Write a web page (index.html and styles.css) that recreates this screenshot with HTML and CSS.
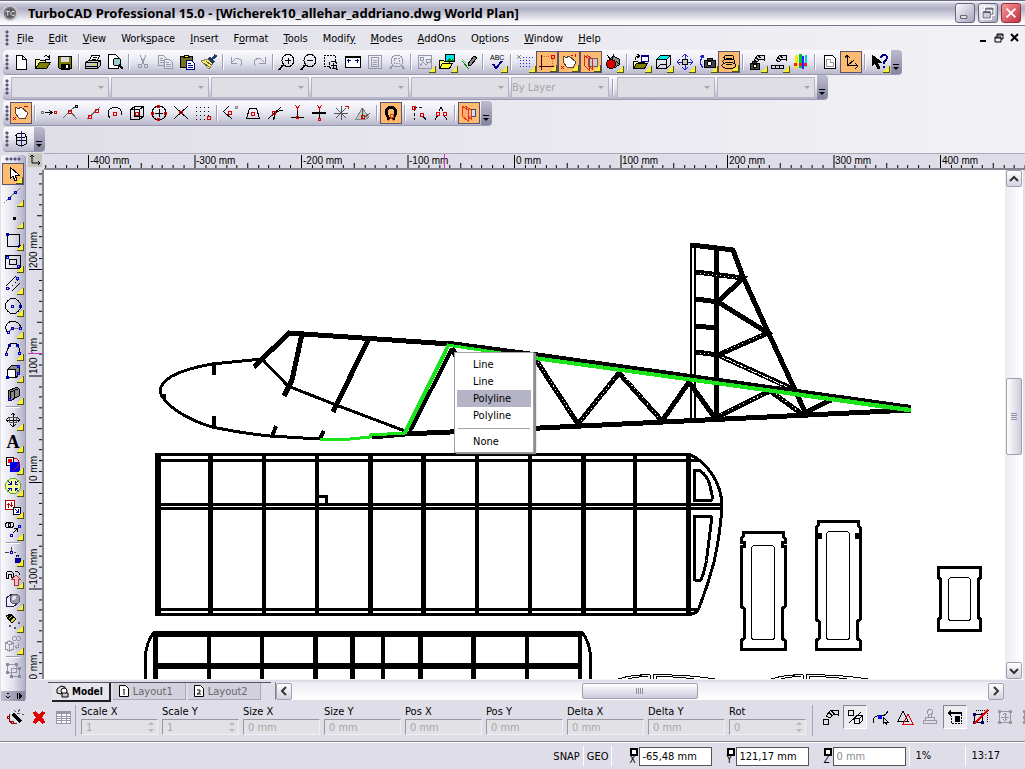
FILE: index.html
```html
<!DOCTYPE html>
<html lang="en">
<head>
    <meta charset="UTF-8">
    <meta name="viewport" content="width=device-width, initial-scale=1.0">
    <title>TurboCAD Professional 15.0</title>
    <link rel="stylesheet" href="styles.css">
</head>
<body>
    <header class="titlebar">
        <svg class="app-logo" viewBox="0 0 18 18"><circle cx="9" cy="9" r="8" fill="#77777c" stroke="#c8c8ce" stroke-width="2"/><circle cx="9" cy="9" r="5" fill="#55555a"/><path d="M4 7h5M6.500 7v5M14 7.500h-3l-1 1v2l1 1h3" stroke="#fff" fill="none"/></svg>
        <h1>TurboCAD Professional 15.0 - [Wicherek10_allehar_addriano.dwg World Plan]</h1>
        <div class="window-buttons">
            <button type="button" aria-label="Minimize"><svg viewBox="0 0 18 18"><path d="M4 12h7v3H4z" fill="#fff" stroke="#445"/></svg></button>
            <button type="button" aria-label="Restore"><svg viewBox="0 0 18 18"><path d="M6 6V3h9v8h-3M3 7h9v8H3z" fill="none" stroke="#fff" stroke-width="3"/><path d="M6.500 7V3.500h8v7h-2M3.500 7.500h8v7h-8zM4 8.500h8M7 4.500h8" fill="none" stroke="#445"/></svg></button>
            <button type="button" class="close" aria-label="Close"><svg viewBox="0 0 18 18"><path d="M4 4l10 10M14 4L4 14" stroke="#fff" stroke-width="2"/></svg></button>
        </div>
    </header>

    <nav class="menubar">
        <span class="grip"></span>
        <a href="#"><u>F</u>ile</a>
        <a href="#"><u>E</u>dit</a>
        <a href="#"><u>V</u>iew</a>
        <a href="#">Work<u>s</u>pace</a>
        <a href="#"><u>I</u>nsert</a>
        <a href="#">F<u>o</u>rmat</a>
        <a href="#"><u>T</u>ools</a>
        <a href="#">Modif<u>y</u></a>
        <a href="#"><u>M</u>odes</a>
        <a href="#"><u>A</u>ddOns</a>
        <a href="#">O<u>p</u>tions</a>
        <a href="#"><u>W</u>indow</a>
        <a href="#"><u>H</u>elp</a>
        <div class="doc-buttons">
            <button type="button" aria-label="Minimize document"><svg viewBox="0 0 10 10"><path d="M2 8h6" stroke="#000" stroke-width="2"/></svg></button>
            <button type="button" aria-label="Restore document"><svg viewBox="0 0 10 10"><path d="M3 4V1h6v5H7M3 2h6M1 4h6v5H1zM1 5h6" fill="none" stroke="#000"/></svg></button>
            <button type="button" aria-label="Close document"><svg viewBox="0 0 10 10"><path d="M1 1l7 7M8 1L1 8" stroke="#000" stroke-width="2"/></svg></button>
        </div>
    </nav>

    <div class="toolbar standard">
        <span class="grip"></span>
        <button type="button" aria-label="New"><svg viewBox="0 0 18 18"><path d="M4.500 2.500h6l4 4v10h-10zM10.500 2.500v4h4" fill="#fff"/></svg></button>
        <button type="button" aria-label="Open"><svg viewBox="0 0 18 18"><path d="M1.500 15.500v-9h4l1 1h5v3" fill="#ffff9c"/><path d="M1.500 15.500l4-6h11l-4 6z" fill="#808000"/><path d="M10 4q3-3 5 1M15 2v4h-4"/></svg></button>
        <button type="button" aria-label="Save"><svg viewBox="0 0 18 18"><path d="M2.500 3.500h13v12h-12l-1-1z" fill="#808000"/><path d="M5 4h8v5H5z" fill="#dcdcdc" stroke="none"/><path d="M5 11h8v5H5z" fill="#000"/><path d="M10 12h2v3h-2z" fill="#fff" stroke="none"/></svg></button>
        <span class="sep"></span>
        <button type="button" aria-label="Print"><svg viewBox="0 0 18 18"><path d="M5.500 7.500l2-5h8l-2 5z" fill="#fff"/><path d="M8.500 4.500h4M7.500 6.500h4"/><path d="M1.500 9.500l3-2h12v5l-3 3h-12z" fill="#c6c6c6"/><path d="M2 9.500h11.500v6M13.500 9.500l3-2M2 13.500h11"/><path d="M9 11.500h3" stroke="#dd0"/></svg></button>
        <button type="button" aria-label="Print preview"><svg viewBox="0 0 18 18"><path d="M2.500 1.500h7l3 3v11h-10z" fill="#fff"/><circle cx="11" cy="9" r="4" fill="#9cc"/><path d="M13 12l4 4" stroke-width="2"/></svg></button>
        <span class="sep"></span>
        <button type="button" class="off" aria-label="Cut"><svg viewBox="0 0 18 18"><path d="M6 2l4 9M12 2L8 11"/><circle cx="6" cy="13" r="2"/><circle cx="12" cy="13" r="2"/></svg></button>
        <button type="button" class="off" aria-label="Copy"><svg viewBox="0 0 18 18"><path d="M2.500 2.500h5l3 3v7h-8zM4 5.500h3M4 7.500h4M4 9.500h4"/><path d="M8.500 6.500h5l3 3v6h-8z" fill="#e6e6f0"/><path d="M10 9.500h3M10 11.500h5M10 13.500h5"/></svg></button>
        <button type="button" aria-label="Paste"><svg viewBox="0 0 18 18"><path d="M2.500 3.500h12v11h-12z" fill="#776f2c"/><path d="M5.500 4.500l1-2h4l1 2z" fill="#ff0"/><path d="M8.500 7.500h5l3 3v6h-8z" fill="#fff" stroke="#000080"/><path d="M10 10.500h3M10 12.500h5M10 14.500h5" stroke="#000080"/></svg></button>
        <button type="button" aria-label="Format painter"><svg viewBox="0 0 18 18"><path d="M1 8l7-2 5 4-4 6z" fill="#ffef60" stroke="#886"/><path d="M4 10l5 4M6 8l5 4" stroke="#555"/><path d="M9 5l5 5M13 6l3-4" stroke-width="3" stroke="#223a66"/></svg></button>
        <span class="sep"></span>
        <button type="button" class="off" aria-label="Undo"><svg viewBox="0 0 18 18"><path d="M3 4v6h6M4 9q4-6 9-2q2 4-1 6"/></svg></button>
        <button type="button" class="off" aria-label="Redo"><svg viewBox="0 0 18 18"><path d="M15 4v6H9M14 9q-4-6-9-2q-2 4 1 6"/></svg></button>
        <span class="sep"></span>
        <button type="button" aria-label="Zoom in"><svg viewBox="0 0 18 18"><circle cx="10" cy="7.500" r="6"/><path d="M7 7.500h6M10 4.500v6"/><path d="M5 12l-4 5" stroke-width="2"/></svg></button>
        <button type="button" aria-label="Zoom out"><svg viewBox="0 0 18 18"><circle cx="10" cy="7.500" r="6"/><path d="M7 7.500h6"/><path d="M5 12l-4 5" stroke-width="2"/></svg></button>
        <button type="button" aria-label="Zoom window"><svg viewBox="0 0 18 18"><path d="M13.500 8V2.500h-11v11H7" stroke-dasharray="2 1"/><circle cx="11" cy="12" r="4" stroke-dasharray="3 1"/><path d="M9 12h5M11.500 10v5M13 15l3 2"/></svg></button>
        <button type="button" aria-label="Zoom extents"><svg viewBox="0 0 18 18"><path d="M1.500 3.500h15v11h-15z" fill="#fff"/><path d="M2 4h14" stroke-width="2"/><path d="M3 7.500h4M4.500 5.500v4M11 7.500h4M13.500 5.500v4" stroke="#000080"/></svg></button>
        <button type="button" class="off" aria-label="Full view"><svg viewBox="0 0 18 18"><path d="M2.500 2.500h13v13h-13z"/><path d="M5.500 4.500h7v9h-7zM7 7.500h4M7 9.500h4M7 11.500h4"/></svg></button>
        <button type="button" class="off" aria-label="Zoom previous"><svg viewBox="0 0 18 18"><circle cx="9" cy="8" r="6"/><path d="M6.500 5.500h5v5h-5z" stroke-dasharray="2 1"/><path d="M4 13l-2 3M14 13l2 3" stroke-width="2"/></svg></button>
        <span class="sep"></span>
        <button type="button" class="off fly" aria-label="Insert picture"><svg viewBox="0 0 18 18"><path d="M2.500 2.500h13v13h-13z"/><circle cx="6" cy="6" r="2"/><path d="M4 13l3-4 3 3 2-2M10 6h4v3h-4z"/></svg></button>
        <button type="button" class="fly" aria-label="Open picture"><svg viewBox="0 0 18 18"><path d="M7.500 1.500h9v7h-9z" fill="#00e0f0"/><path d="M8 8l3-3 2 2 2-2 1 3z" fill="#080" stroke="none"/><path d="M1.500 15.500v-8h4l1 1h5v2" fill="#ff6"/><path d="M1.500 15.500l3-5h10l-3 5z" fill="#ffff30"/></svg></button>
        <button type="button" aria-label="Edit"><svg viewBox="0 0 18 18"><path d="M8 11l6-8 3 2-6 7-3 1z" fill="#888"/><path d="M2 8l7 8" stroke="#080"/><path d="M2 6l4 4" stroke="#8c8"/></svg></button>
        <span class="sep"></span>
        <button type="button" class="fly" aria-label="Spelling"><svg viewBox="0 0 18 18"><text x="2" y="7">ABC</text><path d="M5 11l3 4 6-7" stroke="#000080" stroke-width="2"/></svg></button>
        <span class="sep"></span>
        <button type="button" class="fly" aria-label="Grid"><svg viewBox="0 0 18 18"><path d="M1 2l4 4M5 2L1 6" stroke="#888"/><path d="M7 4.500h11M4 7.500h12M4 10.500h12M4 13.500h12" stroke="#22f" stroke-dasharray="1 2"/></svg></button>
        <button type="button" class="on fly" aria-label="Ortho"><svg viewBox="0 0 18 18"><path d="M3.500 2v15M1 13.500h15" stroke="#400"/><path d="M4 3.500h8M14.500 6v8" stroke="#c63" stroke-dasharray="1 1"/><path d="M13 2h3v3h-3z" stroke="#e00"/></svg></button>
        <button type="button" class="on fly" aria-label="Snap"><svg viewBox="0 0 18 18"><path d="M4 3l2 2 3-2 7 6-3 6-6-1-4-5z" fill="#fff" stroke="#543"/><path d="M1 13l3 3M4 13l-3 3M11 2h2M15 1l1 3" stroke="#e00"/></svg></button>
        <button type="button" class="on fly" aria-label="Workplane"><svg viewBox="0 0 18 18"><path d="M6.500 5.500h9v8h-9z" fill="#ccc" stroke="#666"/><path d="M2 2l5 4v11l-5-5zM5 2l5 4v10l-3-3" stroke="#d22"/></svg></button>
        <button type="button" class="fly" aria-label="Magic"><svg viewBox="0 0 18 18"><path d="M5 7l4-4 6 3v6l-5 3" fill="#888"/><circle cx="7" cy="11" r="4.500" fill="#d00"/><path d="M3 2l4 5M10 1l-2 5M12 8l4 4"/></svg></button>
        <span class="sep"></span>
        <button type="button" class="fly" aria-label="Open view"><svg viewBox="0 0 18 18"><path d="M1.500 15.500v-7h4l1 1h6v2" fill="#ff9"/><path d="M1.500 15.500l3-5h11l-3 5z" fill="#808000"/><path d="M9.500 2.500h7v6h-7z" fill="#fff" stroke="#000080"/><path d="M9 3h8" stroke="#000080" stroke-width="2"/><path d="M3 7q0-4 4-4M5 1l3 2-3 2"/></svg></button>
        <button type="button" class="fly" aria-label="Isometric"><svg viewBox="0 0 18 18"><path d="M2.500 6.500l4-4h10l-4 4z" fill="#0ee"/><path d="M2.500 6.500h10v9h-10zM12.500 15.500l4-4v-9M2.500 15.500l4-4h6"/></svg></button>
        <button type="button" class="fly" aria-label="Walk through"><svg viewBox="0 0 18 18"><circle cx="9" cy="9" r="3" fill="#ccb"/><path d="M9 6V2M6 4l3-3 3 3M9 12v4M6 14l3 3 3-3M6 9H2M4 6L1 9l3 3M12 9h4M14 6l3 3-3 3" stroke="#22c"/></svg></button>
        <button type="button" class="fly" aria-label="Camera"><svg viewBox="0 0 18 18"><path d="M6 7h11v7H6zM9 5h5v2H9z" fill="#444"/><circle cx="11.500" cy="10.500" r="2" fill="#fff"/><path d="M5 15q-5-6 0-12M2 4l3-2 1 3" stroke="#22c"/></svg></button>
        <button type="button" class="on fly" aria-label="Orbit"><svg viewBox="0 0 18 18"><ellipse cx="9" cy="4.500" rx="5" ry="2.500"/><ellipse cx="9" cy="8.500" rx="6" ry="3"/><ellipse cx="9" cy="12.500" rx="7" ry="3"/></svg></button>
        <span class="sep"></span>
        <button type="button" class="fly" aria-label="Camera properties"><svg viewBox="0 0 18 18"><path d="M6 7l4-5h6v5l-4-1-3 3z" fill="#ddd"/><path d="M8 5l3 2M10 3l3 2"/><path d="M2 10h9v6H2zM4 8h4v2H4z" fill="#444"/><circle cx="7" cy="13" r="2" fill="#fff"/></svg></button>
        <button type="button" class="fly" aria-label="View properties"><svg viewBox="0 0 18 18"><path d="M6 7l4-5h6v5l-4-1-3 3z" fill="#ddd"/><path d="M8 5l3 2M10 3l3 2M1.500 12.500h12v3h-12zM5.500 12.500v3M9.500 12.500v3"/></svg></button>
        <button type="button" aria-label="Colors"><svg viewBox="0 0 18 18"><path d="M4 2v13" stroke="#ee0" stroke-width="3"/><path d="M8 1v14" stroke="#0b3" stroke-width="3"/><path d="M11 3v13" stroke="#22f" stroke-width="2"/><path d="M14 2v12" stroke="#0cd" stroke-width="2"/><path d="M2 11h14" stroke="#e22" stroke-width="3" stroke-dasharray="3 2"/></svg></button>
        <span class="sep"></span>
        <button type="button" aria-label="Page"><svg viewBox="0 0 18 18"><path d="M4.500 2.500h8l3 3v10h-11z" fill="#fff"/><path d="M6.500 6.500h4v3h3v4h-7z" stroke="#999"/></svg></button>
        <button type="button" class="on" aria-label="Axes"><svg viewBox="0 0 18 18"><path d="M5.500 13V2M3 5l2-3 3 3M5.500 12.500H16M13 10l3 3-3 3M6 12L12 7"/></svg></button>
        <span class="sep"></span>
        <button type="button" class="fly" aria-label="Help pointer"><svg viewBox="0 0 18 18"><path d="M2 2v11l3-3 3 6 2-1-3-6h4z" fill="#000"/><path d="M11 5q0-3 3-3t3 3q0 2-3 4v2M14 13v2" stroke="#000080" stroke-width="2"/></svg></button>
        <button type="button" class="more" aria-label="Toolbar options"></button>
    </div>

    <div class="toolbar">
        <span class="grip"></span>
        <label class="combo"><select disabled aria-label="Style"><option></option></select></label>
        <label class="combo"><select disabled aria-label="Layer"><option></option></select></label>
        <label class="combo"><select disabled aria-label="Color"><option></option></select></label>
        <label class="combo"><select disabled aria-label="Line pattern"><option></option></select></label>
        <label class="combo"><select disabled aria-label="Line width"><option></option></select></label>
        <label class="combo"><select disabled aria-label="Pen"><option>By Layer</option></select></label>
        <span class="sep"></span>
        <label class="combo"><select disabled aria-label="Brush"><option></option></select></label>
        <label class="combo"><select disabled aria-label="Brush color"><option></option></select></label>
        <button type="button" class="more" aria-label="Toolbar options"></button>
    </div>

    <div class="toolbar">
        <span class="grip"></span>
        <button type="button" class="on" aria-label="No snap"><svg viewBox="0 0 18 18"><path d="M4 3l2 2 3-2 7 6-3 6-6-1-4-5z" fill="#fff" stroke="#543"/><path d="M1 13l3 3M4 13l-3 3M12 2h4" stroke="#e00"/></svg></button>
        <span class="sep"></span>
        <button type="button" aria-label="Snap arrow"><svg viewBox="0 0 18 18"><path d="M1.500 7.500h2v2h-2z" stroke="#777"/><path d="M5 8.500h7M9 6l3 2.500L9 11"/><path d="M14.500 7.500h2v2h-2z" stroke="#d00"/></svg></button>
        <button type="button" aria-label="Vertex"><svg viewBox="0 0 18 18"><path d="M1 14l7-7 7 8M9 6l5-4" stroke="#666"/><path d="M6.500 6.500h3v3h-3z" stroke="#d00"/><path d="M13.500 1.500h2v2h-2z"/></svg></button>
        <button type="button" aria-label="Midpoint"><svg viewBox="0 0 18 18"><path d="M3 15L16 3" stroke="#666"/><path d="M4.500 11.500h3v3h-3zM11.500 5.500h3v3h-3z" stroke="#d00"/></svg></button>
        <button type="button" aria-label="Arc center"><svg viewBox="0 0 18 18"><path d="M4 14q-4-5 0-9q5-4 10 0q2 3 1 6"/><path d="M7.500 8.500h3v3h-3z" stroke="#d00"/></svg></button>
        <button type="button" aria-label="Box center"><svg viewBox="0 0 18 18"><path d="M2.500 5.500h9v10h-9zM2.500 5.500l4-3h9v10l-4 3M11.500 5.500l4-3M6.500 3v9h9"/><path d="M7.500 8.500h3v3h-3z" stroke="#d00"/></svg></button>
        <button type="button" aria-label="Quadrant"><svg viewBox="0 0 18 18"><circle cx="9" cy="9" r="7"/><path d="M9 5v8M5 9h8"/><path d="M7.500 1.500h2v2h-2zM7.500 14.500h2v2h-2zM1.500 8.500h2v2h-2zM14.500 8.500h2v2h-2z" stroke="#d00"/></svg></button>
        <button type="button" aria-label="Intersection"><svg viewBox="0 0 18 18"><path d="M2 2l14 13M16 2L2 15"/><path d="M7.500 7.500h3v2h-3z" stroke="#d00"/></svg></button>
        <button type="button" aria-label="Grid snap"><svg viewBox="0 0 18 18"><path d="M2 3.500h14M2 7.500h14M2 11.500h14M2 15.500h10" stroke-dasharray="1 3"/><path d="M13.500 12.500h3v3h-3z" stroke="#d00"/></svg></button>
        <span class="sep"></span>
        <button type="button" aria-label="Nearest"><svg viewBox="0 0 18 18"><path d="M1 8l6-6M2 8l8 7"/><path d="M6.500 7.500h3v3h-3z" stroke="#d00"/><path d="M13.500 2.500h2v2h-2z" stroke="#888"/></svg></button>
        <button type="button" aria-label="Center of gravity"><svg viewBox="0 0 18 18"><path d="M5.500 4.500h7l3 10h-13z"/><path d="M7.500 8.500h3v3h-3z" stroke="#d00"/></svg></button>
        <button type="button" aria-label="Tangent"><svg viewBox="0 0 18 18"><path d="M2 15L15 3M8 16q-1-9 9-10"/><path d="M6.500 7.500h3v3h-3z" stroke="#d00"/></svg></button>
        <button type="button" aria-label="Ortho snap"><svg viewBox="0 0 18 18"><path d="M9.500 5v8M3 13.500h13"/><path d="M7 1l2.500 3L12 1M9.500 4v3M8.500 12.500h2v2h-2z" stroke="#d00"/></svg></button>
        <button type="button" aria-label="Perpendicular"><svg viewBox="0 0 18 18"><path d="M9.500 5v9"/><path d="M2 9h14" stroke-width="2"/><path d="M7 1l2.500 3L12 1M9.500 4v3M8.500 14.500h2v2h-2z" stroke="#d00"/></svg></button>
        <button type="button" aria-label="Divide"><svg viewBox="0 0 18 18"><path d="M2 9h14M9 2v14M4 4l10 10M14 4L4 14" stroke="#555"/><path d="M13 2h3v3" stroke="#d00"/></svg></button>
        <button type="button" aria-label="Face"><svg viewBox="0 0 18 18"><path d="M2 15l6-11 7 9-3 2z" fill="#b9cfc4" stroke="#888"/><path d="M8 4v10M10 14l6-5" stroke="#555"/><path d="M7.500 11.500h3v3h-3z" stroke="#d00"/></svg></button>
        <span class="sep"></span>
        <button type="button" class="on" aria-label="Magnetic point"><svg viewBox="0 0 18 18"><path d="M5 14h3M10 14h3M6 13Q3 8 5 5q4-4 8 0q2 3-1 8" stroke-width="3"/><path d="M8 10h3v3H8zM6 17l3-3 3 3" stroke="#d40"/></svg></button>
        <span class="sep"></span>
        <button type="button" aria-label="Extend ortho"><svg viewBox="0 0 18 18"><path d="M4.500 4v12M4 3.500h10" stroke-dasharray="3 2"/><path d="M2.500 2.500h3v3h-3zM10.500 9.500h3v3h-3z" stroke="#d00"/><path d="M13 12l3 4"/></svg></button>
        <button type="button" aria-label="Apex"><svg viewBox="0 0 18 18"><path d="M3 16l3-5M15 16l-3-5M7 7l2-4 2 4"/><path d="M4.500 8.500h3v3h-3zM11.500 8.500h3v3h-3z" stroke="#d00"/></svg></button>
        <span class="sep"></span>
        <button type="button" class="on" aria-label="Plane snap"><svg viewBox="0 0 18 18"><path d="M8.500 5.500h7v7h-7z" fill="#ddd" stroke="#447"/><path d="M2 2l6 4v11l-6-5zM5 2l6 4v9l-3-2" stroke="#e31" fill="#f9a07088"/></svg></button>
        <button type="button" class="more" aria-label="Toolbar options"></button>
    </div>

    <div class="toolbar short">
        <span class="grip"></span>
        <button type="button" aria-label="Cylinder"><svg viewBox="0 0 18 18"><ellipse cx="9" cy="5.500" rx="5" ry="2.500"/><path d="M4 6v8q5 4 10 0V6M4 10h10"/><path d="M9 1v16" stroke="#22a"/></svg></button>
        <button type="button" class="more" aria-label="Toolbar options"></button>
    </div>

    <main class="workspace">
        <aside class="palette">
            <span class="grip-h"></span>
            <button type="button" class="on fly" aria-label="Select"><svg viewBox="0 0 18 18"><path d="M6 2v12l3-3 2 5 2-1-2-5h4z" fill="#fff"/></svg></button>
            <button type="button" class="fly" aria-label="Line"><svg viewBox="0 0 18 18"><path d="M0 16L16 1" stroke-dasharray="2 1" stroke="#777"/><path d="M4.500 10.500h2v2h-2zM10.500 4.500h2v2h-2z" stroke="#00c"/></svg></button>
            <button type="button" class="fly" aria-label="Point"><svg viewBox="0 0 18 18"><path d="M9 8h3v3H9z" fill="#000" stroke="none"/></svg></button>
            <button type="button" class="fly" aria-label="Rectangle"><svg viewBox="0 0 18 18"><path d="M3.500 3.500h12v12h-12z"/><path d="M2.500 2.500h2v2h-2zM14.500 14.500h2v2h-2z" stroke="#00c"/></svg></button>
            <button type="button" class="fly" aria-label="Double rectangle"><svg viewBox="0 0 18 18"><path d="M1.500 2.500h15v13h-15zM5.500 6.500h7v5h-7z"/><path d="M2.500 3.500h2v2h-2zM13.500 12.500h2v2h-2z" stroke="#00c"/></svg></button>
            <button type="button" class="fly" aria-label="Parallel lines"><svg viewBox="0 0 18 18"><path d="M2 11L12 1M8 16l8-8"/><path d="M5 14L15 4" stroke-dasharray="2 2"/><path d="M2.500 12.500h2v2h-2zM12.500 2.500h2v2h-2z" stroke="#00c"/></svg></button>
            <button type="button" class="fly" aria-label="Circle"><svg viewBox="0 0 18 18"><circle cx="9" cy="9" r="7.500"/><path d="M7.500 8.500h2v2h-2zM15.500 8.500h2v2h-2z" stroke="#00c"/></svg></button>
            <button type="button" class="fly" aria-label="Arc"><svg viewBox="0 0 18 18"><path d="M4 14Q0 9 3 5q4-5 11-1q3 3 3 5"/><path d="M5 13l3-4h7" stroke="#777"/><path d="M3.500 12.500h2v2h-2zM7.500 8.500h2v2h-2zM15.500 8.500h2v2h-2z" stroke="#00c"/></svg></button>
            <button type="button" class="fly" aria-label="Curve"><svg viewBox="0 0 18 18"><path d="M2 13Q5 4 7 2h5q3 3 4 9"/><path d="M1.500 12.500h2v2h-2zM4.500 3.500h2v2h-2zM12.500 3.500h2v2h-2zM14.500 11.500h2v2h-2z" stroke="#00c"/></svg></button>
            <button type="button" class="fly" aria-label="Box"><svg viewBox="0 0 18 18"><path d="M4 6l4-4h7v9l-3 4" fill="#888"/><path d="M3.500 6.500h8v8h-8z" fill="#fff"/><path d="M2.500 13.500h2v2h-2zM13.500 2.500h2v2h-2zM13.500 9.500h2v2h-2z" stroke="#00c"/></svg></button>
            <button type="button" class="fly" aria-label="Wall"><svg viewBox="0 0 18 18"><path d="M4 6l9-4 2 2v7l-9 5-2-2z" fill="#888"/><path d="M6 7l8-3M6 7v8M10 6v8"/><path d="M4.500 13.500h2v2h-2z" stroke="#00c"/></svg></button>
            <span class="sep-h"></span>
            <button type="button" class="fly" aria-label="Move"><svg viewBox="0 0 18 18"><path d="M9 2v14M2 9h14M6.500 4.500L9 2l2.500 2.500M6.500 13.500L9 16l2.500-2.500M4.500 6.500L2 9l2.500 2.500M13.500 6.500L16 9l-2.500 2.500"/><path d="M5.500 6.500h7v5h-7z" stroke="#555"/></svg></button>
            <button type="button" class="fly letter" aria-label="Text">A</button>
            <button type="button" class="fly" aria-label="Boolean"><svg viewBox="0 0 18 18"><path d="M2.500 2.500h7v8h-7z" fill="#fff"/><path d="M4 4h3v3H4z" fill="#e00" stroke="#e00"/><path d="M6 7h10v10H6z" fill="#00e" stroke="none"/><path d="M10 3q6 1 5 7L9 16" stroke="#e00"/></svg></button>
            <button type="button" class="fly" aria-label="Converge"><svg viewBox="0 0 18 18"><circle cx="9" cy="9" r="7.500" fill="#f4ff9a" stroke="#5a2"/><path d="M4 4l3 3M7 4v3H4M14 4l-3 3M11 4v3h3M4 14l3-3M4 11h3v3M14 14l-3-3M14 11h-3v3" stroke="#00a"/></svg></button>
            <button type="button" class="fly" aria-label="Transform"><svg viewBox="0 0 18 18"><path d="M1.500 1.500h9v9h-9z" fill="#fff" stroke="#a00"/><path d="M4.500 4v5M7.500 3v5M3 5.500h3M6 6.500h3" stroke="#a00"/><path d="M9.500 8.500h7v7h-7z" fill="#fff"/><path d="M11 10l3 3M14.500 10v3h-3" stroke="#00c"/></svg></button>
            <button type="button" class="fly" aria-label="Link"><svg viewBox="0 0 18 18"><circle cx="4" cy="4" r="2.500"/><circle cx="7" cy="4" r="2.500"/><path d="M9 12l4-4M10 7.500h3v3"/><path d="M6.500 13.500h2v2h-2zM14.500 4.500h2v2h-2z" stroke="#00c"/></svg></button>
            <span class="sep-h"></span>
            <button type="button" class="fly" aria-label="Lock"><svg viewBox="0 0 18 18"><path d="M1 5.500h4M7.500 0v4M10 5.500h2" stroke="#633"/><path d="M6.500 4.500h2v2h-2z" stroke="#00c"/><path d="M11 11h5v4h-5z" fill="#00a" stroke="#006"/><path d="M12.500 10V8.500h2V10" stroke="#006"/></svg></button>
            <button type="button" class="fly" aria-label="Pull"><svg viewBox="0 0 18 18"><path d="M5 9H2V4l2-2h3l2 2v4H7V5H4v4M11 2q4 0 5 4"/><path d="M12 6l4 4h-2v6h-4v-6H8z" fill="#fbb" stroke="#a33"/></svg></button>
            <button type="button" class="fly" aria-label="Shade"><svg viewBox="0 0 18 18"><path d="M2 7l6-4 7 2v6l-6 5-7-1z" fill="#eef" stroke="#225"/><circle cx="11" cy="8" r="5" fill="#99a" stroke="#556"/><circle cx="10" cy="7" r="2" fill="#dde" stroke="none"/></svg></button>
            <button type="button" class="fly" aria-label="Light"><svg viewBox="0 0 18 18"><path d="M2 3l5-2 5 5-4 4z" fill="#dd2"/><path d="M3 6l4-4M5 8l4-4" stroke-width="2"/><path d="M5.500 12.500h1v1h-1zM14.500 9.500h1v1h-1zM10.500 14.500h1v1h-1z" stroke="#558"/></svg></button>
            <button type="button" class="off fly" aria-label="Group"><svg viewBox="0 0 18 18"><path d="M1.500 8l4-2 4 2v6l-4 2-4-2zM2 8l4 2 3-2M5.500 10v6M14.500 8v4h-3M13 10l-2 2 2 2"/><circle cx="10.500" cy="3.500" r="2"/><circle cx="14.500" cy="3.500" r="2"/></svg></button>
            <span class="sep-h"></span>
            <button type="button" class="off" aria-label="Nodes"><svg viewBox="0 0 18 18"><path d="M3.500 3.500h9v8h-9zM7.500 7.500h8v8h-8z"/><path d="M2 2h3v3H2zM11 2h3v3h-3zM2 10h3v3H2zM14 14h3v3h-3zM6 14h3v3H6zM14 6h3v3h-3z" fill="#88899c" stroke="none"/></svg></button>
            <button type="button" class="more-h" aria-label="Palette options"><svg viewBox="0 0 24 10"><path d="M6 2h2M5 5l2 2 2-2M16.500 2v6"/><path d="M18 2v6l3-3z" fill="#000"/></svg></button>
        </aside>

        <button type="button" class="origin" aria-label="Ruler origin"><svg viewBox="0 0 14 14"><path d="M4 2v8h8M2 4l2-2 2 2M10 8l2 2-2 2" stroke="#000" fill="none"/></svg></button>

        <div class="ruler-top">
            <svg>
                <defs>
                    <pattern id="ticksX" x="44" y="0" width="106.500" height="14" patternUnits="userSpaceOnUse">
                        <path d="M.5 1v13M11 11v3M21.500 11v3M32 11v3M42.500 11v3M53.500 9v5M64 11v3M74.500 11v3M85.500 11v3M96 11v3" stroke="#000"/>
                    </pattern>
                </defs>
                <rect width="100%" height="14" fill="url(#ticksX)"/>
                <text x="46" y="10">-400 mm</text>
                <text x="152" y="10">-300 mm</text>
                <text x="259" y="10">-200 mm</text>
                <text x="365" y="10">-100 mm</text>
                <text x="472" y="10">0 mm</text>
                <text x="578" y="10">100 mm</text>
                <text x="685" y="10">200 mm</text>
                <text x="791" y="10">300 mm</text>
                <text x="898" y="10">400 mm</text>
                <path d="M400.500 0v14" stroke="#c3c"/>
            </svg>
        </div>

        <div class="ruler-left">
            <svg>
                <defs>
                    <pattern id="ticksY" x="0" y="99" width="14" height="106.500" patternUnits="userSpaceOnUse">
                        <path d="M1 .5h13M11 11h3M11 21.500h3M11 32h3M11 42.500h3M9 53.500h5M11 64h3M11 74.500h3M11 85.500h3M11 96h3" stroke="#000"/>
                    </pattern>
                </defs>
                <rect width="14" height="100%" fill="url(#ticksY)"/>
                <text transform="translate(9 98) rotate(-90)">200 mm</text>
                <text transform="translate(9 204) rotate(-90)">100 mm</text>
                <text transform="translate(9 311) rotate(-90)">0 mm</text>
                <text transform="translate(9 418) rotate(-90)">-100 mm</text>
                <text transform="translate(9 524) rotate(-90)">-200 mm</text>
                <path d="M0 183.500h14" stroke="#c3c"/>
            </svg>
        </div>

        <section class="canvas">
            <svg class="drawing">
                <g transform="translate(-44 -170)">
                    <!-- fuselage nose and cabin -->
                    <g stroke-width="3">
                        <path d="M262 359L212 364Q188 368 172 376Q160 383 160 392Q163 401 177 411Q192 421 212 427Q240 433 270 436L320 439"/>
                        <path d="M262 359L288 386L336 405L405 431"/>
                        <path d="M161 396h5" stroke-width="4"/>
                    </g>
                    <g stroke-width="5">
                        <path d="M254 367L289 333L450 344"/>
                        <path d="M302 334L292 380L284 396M369 338L333 412"/>
                        <path d="M214 364v11M214 416v11M276 426l-4 11M324 431l-4 7" stroke-width="4"/>
                        <path d="M372 437L405 434L540 428L911 410"/>
                    </g>
                    <path d="M452 349L410 431" stroke-width="4"/>
                    <path d="M450 343L534 354L911 407" stroke-width="4"/>
                    <!-- tail trusses -->
                    <g stroke-width="5">
                        <path d="M452 348l6 12M536 360L578 424L619 373L662 421L689 382L715 418L770 391L802 414L831 400"/>
                        <path d="M692 245L733 250L743 277L768 332L795 390L805 412"/>
                        <path d="M716 248V420"/>
                        <path d="M696 272L743 278L718 302L768 333L718 355L795 390M696 299l22 3M696 326l20 2M696 352l22 3"/>
                    </g>
                    <path d="M691 243V420M695 248V420" stroke-width="2"/>
                    <g stroke="#fff" stroke-width="1" stroke-dasharray="1 3">
                        <path d="M538 362L575 419M581 421L615 378M624 376L659 418M721 414L764 394M776 394L798 411M700 273L740 278M727 350L762 335M700 353h12"/>
                        <path d="M722 357L787 387" stroke-dasharray="3 1"/>
                    </g>
                    <g stroke="#1be41b" stroke-width="4">
                        <path d="M320 439L350 439L370 437L370 435L405 433L448 345L454 346L534 358L911 411" stroke-width="3"/>
                        <path d="M405 433L448 346M534 358L911 410"/>
                    </g>
                    <!-- wing -->
                    <path d="M158 453V616" stroke-width="6"/>
                    <g stroke-width="3">
                        <path d="M157 454.500H691M160 460.500H698M160 504.500H722M160 508.500H722M160 609.500H699M157 614.500H692"/>
                        <path d="M691 455Q702 460 712 474Q722 489 722 507Q720 535 714 562Q708 585 699 608Q697 614 690 614"/>
                        <path d="M694.500 470.500h5q7 4 10 13l3 14q0 2-2 3h-16zM694.500 516.500h15q3 0 2 4l-5 40q-3 14-5 18q-2 4-7 1z"/>
                        <path d="M318 496.500h8.500v8" stroke-width="3"/>
                    </g>
                    <path d="M210.500 454V616M370.500 454V616M423.500 454V616M583.500 454V616M688.500 454V616" stroke-width="5"/>
                    <path d="M264 454V616M317 454V616M477 454V616M530 454V616M635 454V616" stroke-width="4"/>
                    <!-- second wing panel -->
                    <path d="M155 633.500H581M155 665.500H581" stroke-width="6"/>
                    <path d="M155.500 631V680M315.500 631V680M352.500 631V680M420.500 631V680M473.500 631V680" stroke-width="5"/>
                    <path d="M209 631V680M262 631V680M383 631V680M527 631V680M580 631V680" stroke-width="4"/>
                    <path d="M155 631Q145 643 145.500 660V680M581 631Q591 643 590.500 660V680" stroke-width="3"/>
                    <!-- bulkheads -->
                    <g stroke-width="3">
                        <path d="M743 532.500h40v4l2 2v4h-3v4h3v60l-3 2v30l3 2v9h-44v-9l3-2v-30l-3-2v-60h3v-4h-3v-4l2-2z"/>
                        <path d="M818 521.500h40v4l2 2v7h-4v3h4v82l-3 2v17l3 2v9h-44v-9l3-2v-17l-3-2v-82h4v-3h-4v-7l2-2z"/>
                        <path d="M938.500 567.500h42v10l-2 2v38l2 2v11h-42v-11l2-2v-38l-2-2z"/>
                    </g>
                    <g stroke-width="1">
                        <rect x="751.500" y="545.500" width="23" height="94" rx="3"/>
                        <rect x="826.500" y="531.500" width="23" height="108" rx="3"/>
                        <rect x="948.500" y="577.500" width="22" height="43" rx="3"/>
                        <path d="M618 679q16-5 32-4v4h3v-4q30-1 62 4M628 679q10-3 20-2M656 679v-2q20-1 38 2"/>
                        <path d="M771 679q16-5 32-4v4h3v-4q30-1 62 4M781 679q10-3 20-2M809 679v-2q20-1 38 2"/>
                    </g>
                </g>
            </svg>
            <div class="popup" role="menu">
                <button type="button" role="menuitem">Line</button>
                <button type="button" role="menuitem">Line</button>
                <button type="button" role="menuitem" class="selected">Polyline</button>
                <button type="button" role="menuitem">Polyline</button>
                <hr>
                <button type="button" role="menuitem">None</button>
            </div>
        </section>

        <div class="scroll-y">
            <button type="button" class="arrow" aria-label="Scroll up"><svg viewBox="0 0 10 10"><path d="M1 7l4-4 4 4"/></svg></button>
            <span class="before"></span>
            <span class="thumb"></span>
            <span class="after"></span>
            <button type="button" class="arrow" aria-label="Scroll down"><svg viewBox="0 0 10 10"><path d="M1 3l4 4 4-4"/></svg></button>
        </div>

        <div class="bottom-row">
            <div class="tabs">
                <button type="button" class="tab active"><svg viewBox="0 0 14 14"><path d="M1 4l4-3 4 1v4L5 9 1 8z" fill="#ddd" stroke="#000"/><circle cx="8" cy="6" r="3" fill="#fff" stroke="#000"/><path d="M6 8h6v4H6z" fill="#ccc" stroke="#000"/></svg>Model</button>
                <button type="button" class="tab"><svg viewBox="0 0 14 14"><path d="M2.500 1.500h6l3 3v8h-9zM6 6l1-1v6" fill="#fff" stroke="#000"/></svg>Layout1</button>
                <button type="button" class="tab"><svg viewBox="0 0 14 14"><path d="M2.500 1.500h6l3 3v8h-9z" fill="#fff" stroke="#000"/><path d="M5 6h3v2L5 10h4" fill="none" stroke="#000"/></svg>Layout2</button>
            </div>
            <div class="scroll-x">
                <button type="button" class="arrow" aria-label="Scroll left"><svg viewBox="0 0 10 10"><path d="M7 1L3 5l4 4"/></svg></button>
                <span class="before"></span>
                <span class="thumb"></span>
                <span class="after"></span>
                <button type="button" class="arrow" aria-label="Scroll right"><svg viewBox="0 0 10 10"><path d="M3 1l4 4-4 4"/></svg></button>
            </div>
        </div>
    </main>

    <form class="inspector">
        <div class="inspector-tools">
            <button type="button" aria-label="Wizard"><svg viewBox="0 0 18 18"><path d="M3 6v6q3 5 8 3" stroke="#900"/><path d="M1.500 8.500h2v2h-2zM5.500 13.500h2v2h-2z" stroke="#900"/><path d="M7 6l8 8" stroke-width="3"/><path d="M8 2l2 2M14 1l-2 3M16 6h2M11 5h3" stroke="#555"/></svg></button>
            <button type="button" aria-label="Cancel"><svg viewBox="0 0 18 18"><path d="M4 4l10 11M14 4L4 15" stroke="#e00000" stroke-width="4"/></svg></button>
            <button type="button" class="off" aria-label="Table"><svg viewBox="0 0 18 18"><path d="M2.500 3.500h14v12h-14z" fill="#fff"/><path d="M3 5h13" stroke-width="2"/><path d="M3 8.500h13M3 10.500h13M3 12.500h13M7.500 5v10M12.500 5v10"/></svg></button>
        </div>
        <label class="field spin">Scale X<input type="text" value="1" disabled></label>
        <label class="field spin">Scale Y<input type="text" value="1" disabled></label>
        <label class="field">Size X<input type="text" value="0 mm" disabled></label>
        <label class="field">Size Y<input type="text" value="0 mm" disabled></label>
        <label class="field">Pos X<input type="text" value="0 mm" disabled></label>
        <label class="field">Pos Y<input type="text" value="0 mm" disabled></label>
        <label class="field">Delta X<input type="text" value="0 mm" disabled></label>
        <label class="field">Delta Y<input type="text" value="0 mm" disabled></label>
        <label class="field spin">Rot<input type="text" value="0" disabled></label>
        <div class="inspector-modes">
            <button type="button" aria-label="Properties"><svg viewBox="0 0 18 18"><path d="M5 8l5-6h7v5l-4-1-4 4z" fill="#ddd"/><path d="M8 5l4 3M10 3l4 3"/><path d="M2.500 11.500h5v5h-5z"/></svg></button>
            <button type="button" class="pressed" aria-label="2D/3D"><svg viewBox="0 0 18 18"><path d="M2.500 2.500h5v5h-5zM3 15L15 4M8.500 10.500h5v5h-5zM8.500 10.500l3-3h5v5l-3 3M13.500 10.500l3-3"/></svg></button>
            <button type="button" aria-label="Edit nodes"><svg viewBox="0 0 18 18"><path d="M2 15q0-8 6-7t9-5M12 9v7l2-2 2 3M12 9l5 5h-3"/><path d="M7 7h3v3H7z" fill="#00e" stroke="#00e"/></svg></button>
            <button type="button" aria-label="Copy mode"><svg viewBox="0 0 18 18"><path d="M2 13l5-10 5 10z"/><path d="M7 16l5-10 5 10z" stroke="#d00"/></svg></button>
            <button type="button" class="off" aria-label="Stamp"><svg viewBox="0 0 18 18"><circle cx="9" cy="4" r="2.500"/><path d="M7.500 6v3M10.500 6v3M4.500 9.500h9v3h-9zM2.500 12.500h13v3h-13z"/></svg></button>
            <button type="button" class="pressed" aria-label="Reference point"><svg viewBox="0 0 18 18"><path d="M15.500 5.500v10h-10v-8" stroke-dasharray="2 1"/><path d="M9 8h4v5H9z" fill="#000"/><path d="M1 5l4-3v2h11v2H5v2z" fill="#000" stroke="none"/></svg></button>
            <button type="button" aria-label="Selector"><svg viewBox="0 0 18 18"><path d="M5 2.500h11.500v11" stroke-dasharray="1 1"/><path d="M3.500 6.500h8v8h-8z"/><path d="M2 5h3v3H2zM10 13h3v3h-3zM2 13h3v3H2zM10 5h3v3h-3z" fill="#006" stroke="none"/><path d="M3 16L17 2" stroke="#e00" stroke-width="2"/></svg></button>
            <button type="button" class="off" aria-label="Nodes"><svg viewBox="0 0 18 18"><path d="M3.500 3.500h11v11h-11zM9 5v8M5 9h8M7 7l2-2 2 2M7 11l2 2 2-2"/><path d="M2 2h3v3H2zM13 2h3v3h-3zM2 13h3v3H2zM13 13h3v3h-3z" fill="#999" stroke="none"/></svg></button>
            <button type="button" class="off" aria-label="More nodes"><svg viewBox="0 0 18 18"><path d="M3.500 3.500h11v11h-11z"/><path d="M2 2h3v3H2zM2 8h3v3H2zM2 13h3v3H2z" fill="#999" stroke="none"/></svg></button>
        </div>
    </form>

    <footer class="statusbar">
        <button type="button" class="mode">SNAP</button>
        <button type="button" class="mode">GEO</button>
        <label class="coord"><span class="axis">X</span><input type="text" value="-65,48 mm"></label>
        <label class="coord"><span class="axis">Y</span><input type="text" value="121,17 mm"></label>
        <label class="coord"><span class="axis">Z</span><input type="text" class="dim" value="0 mm"></label>
        <span class="zoom">1%</span>
        <span class="clock">13:17</span>
    </footer>
</body>
</html>
```
FILE: styles.css
```css
* {
    margin: 0;
    padding: 0;
    box-sizing: border-box;
}

body {
    height: 100vh;
    display: flex;
    flex-direction: column;
    overflow: hidden;
    background: linear-gradient(90deg, #dfdee8, #f2f2f6) 0 0 / 100% 153px no-repeat, #dfdee8;
    font-family: Tahoma, "DejaVu Sans Condensed", "Liberation Sans", sans-serif;
    font-size: 11px;
    color: #000;
}

button, input, select {
    font: inherit;
    color: inherit;
}

button {
    border: none;
    background: none;
    flex: none;
}

svg {
    display: block;
}

/* title bar */
.titlebar {
    display: flex;
    align-items: center;
    height: 26px;
    flex: none;
    padding: 0 4px 0 2px;
    border-top: 1px solid #6c6b85;
    border-bottom: 1px solid #77768f;
    background: linear-gradient(#fff 0, #c6c5d6 3px, #b1b0c4 8px, #f4f4f8 20px, #fff 24px);
}

.app-logo {
    width: 16px;
    height: 16px;
    margin-right: 10px;
}

.titlebar h1 {
    flex: 1;
    font-family: "Trebuchet MS", "Noto Sans", sans-serif;
    font-size: 13px;
    white-space: nowrap;
    font-weight: bold;
}

.window-buttons {
    display: flex;
    gap: 3px;
}

.window-buttons button {
    width: 20px;
    height: 20px;
    padding: 1px;
    border: 1px solid #66657e;
    border-radius: 3px;
    background: linear-gradient(135deg, #fafafc, #a5a4ba);
}

.window-buttons svg {
    width: 16px;
    height: 16px;
}

.window-buttons .close {
    background: linear-gradient(135deg, #f49a9a, #c33040);
    border-color: #93303c;
}

/* menu */
.menubar {
    display: flex;
    align-items: center;
    height: 24px;
    flex: none;
    padding-left: 3px;
}

.menubar a {
    color: #000;
    text-decoration: none;
    padding: 0 8px 0 7px;
}

.grip {
    width: 7px;
    height: 16px;
    flex: none;
    background: radial-gradient(circle at 4px 2px, #555472 1px, transparent 2px) 0 0 / 7px 4px;
}

.doc-buttons {
    display: flex;
    gap: 6px;
    margin-left: auto;
    padding-right: 5px;
}

.doc-buttons button {
    width: 10px;
    height: 10px;
}

/* toolbars */
.toolbar {
    display: flex;
    align-items: center;
    height: 25px;
    flex: none;
    width: max-content;
    margin: 0 0 1px 3px;
    border-radius: 4px;
    border-bottom: 1px solid #9a99b2;
    background: linear-gradient(#fbfbfe, #e6e6f0 50%, #b9b8cc);
}

.toolbar.standard {
    margin-bottom: 0;
}

.toolbar svg,
.palette svg,
.inspector svg {
    width: 18px;
    height: 18px;
    margin: auto;
    fill: none;
    stroke: #000;
    shape-rendering: crispEdges;
}

.toolbar text {
    font-family: "Liberation Sans", sans-serif;
    font-size: 7px;
    fill: #000;
    stroke: none;
}

.palette .letter {
    font-family: "Liberation Serif", serif;
    font-size: 18px;
    line-height: 22px;
    font-weight: bold;
}

.toolbar button {
    position: relative;
    width: 22px;
    height: 22px;
}

.toolbar .on,
.palette .on {
    background: #fdbb70;
    border: 1px solid #5a5370;
}

.toolbar .off svg,
.palette .off svg,
.inspector .off svg {
    stroke: #9796ab;
}

.fly::after {
    content: "";
    position: absolute;
    right: 0;
    bottom: 0;
    width: 6px;
    height: 6px;
    background: linear-gradient(135deg, transparent 50%, #f5ef3a 50%);
    border-right: 1px solid #55520e;
    border-bottom: 1px solid #55520e;
}

.sep {
    width: 2px;
    height: 16px;
    margin: 0 2px;
    flex: none;
    background: #9c9bb4;
    border-right: 1px solid #fff;
}

.toolbar .more {
    width: 11px;
    height: 24px;
    margin-left: 1px;
    border-radius: 0 4px 4px 0;
    background: linear-gradient(#bdbccf, #85849f);
}

.more::after {
    content: "";
    position: absolute;
    left: 2px;
    bottom: 4px;
    border: 3px solid transparent;
    border-top-color: #000;
    border-bottom: none;
}

.more::before {
    content: "";
    position: absolute;
    left: 2px;
    bottom: 9px;
    width: 6px;
    height: 1px;
    background: #000;
}

.short .more {
    margin-left: 2px;
}

.combo {
    position: relative;
    width: 98px;
    margin: 0 1px;
}

.combo select {
    display: block;
    width: 100%;
    height: 21px;
    appearance: none;
    border: 1px solid #b4b3c8;
    background: #dfdee4;
    color: #a5a4a8;
    opacity: 1;
}

.combo::after {
    content: "";
    position: absolute;
    right: 5px;
    top: 9px;
    border: 3px solid transparent;
    border-top-color: #a5a4b0;
    border-bottom: none;
}

/* work area */
.workspace {
    flex: 1;
    min-height: 0;
    display: grid;
    grid-template-columns: 28px 16px 1fr 20px;
    grid-template-rows: 17px 1fr 22px;
}

.palette {
    grid-row: 1 / 4;
    display: flex;
    flex-direction: column;
    align-items: center;
    width: 25px;
    margin: 2px 0 0 1px;
    border-right: 1px solid #9a99b2;
    border-radius: 4px;
    background: linear-gradient(90deg, #fafafd, #e2e1ec 50%, #b1b0c7);
}

.palette button {
    position: relative;
    width: 22px;
    height: 22px;
}

.grip-h {
    width: 16px;
    height: 8px;
    flex: none;
    background: radial-gradient(circle at 2px 4px, #555472 1px, transparent 2px) 0 0 / 4px 8px;
}

.sep-h {
    width: 14px;
    height: 2px;
    margin: 1px 0;
    flex: none;
    background: #9c9bb4;
    border-bottom: 1px solid #fff;
}

.palette .more-h {
    width: 24px;
    height: 10px;
    margin-top: auto;
    background: linear-gradient(90deg, #bdbccf, #85849f);
}

.palette .more-h svg {
    width: 24px;
    height: 10px;
}

.origin {
    width: 14px;
    height: 14px;
    background: #c5c4bd;
}

.ruler-top {
    grid-column: 3 / 5;
    border-top: 1px solid #a9a8b4;
    border-bottom: 2px solid #85848c;
    background: #dfdee8;
    overflow: hidden;
}

.ruler-top svg,
.ruler-left svg,
.drawing {
    width: 100%;
    height: 100%;
    shape-rendering: crispEdges;
}

.ruler-left {
    border-right: 2px solid #85848c;
    overflow: hidden;
}

.ruler-top text,
.ruler-left text {
    font-family: "Liberation Sans", sans-serif;
    font-size: 10px;
}

.canvas {
    position: relative;
    min-height: 0;
    overflow: hidden;
    background: #fff;
}

.drawing {
    position: absolute;
    inset: 0;
    fill: none;
    stroke: #000;
}

.popup {
    position: absolute;
    left: 410px;
    top: 182px;
    width: 80px;
    padding: 3px 2px 2px;
    background: #fff;
    border: 1px solid #a2a1a8;
    box-shadow: 2px 1px 1px #8e8e92;
}

.popup button {
    display: block;
    width: 100%;
    height: 17px;
    padding-left: 16px;
    text-align: left;
}

.popup .selected {
    background: #b5b3c6;
}

.popup hr {
    margin: 4px 1px;
    border: none;
    border-top: 1px solid #a2a1a8;
}

/* scroll bars */
.scroll-y,
.scroll-x {
    display: flex;
    background: linear-gradient(90deg, #ecebf2, #fff);
}

.scroll-y {
    flex-direction: column;
    align-items: center;
    margin: 0 2px 0 0;
}

.scroll-x {
    flex: 1;
    align-items: center;
    margin-right: 21px;
    border-left: 1px solid #85848c;
    background: linear-gradient(#ecebf2, #fff);
}

.arrow {
    width: 16px;
    height: 17px;
    border: 1px solid #a09fb0;
    border-radius: 2px;
    background: linear-gradient(#fff, #d3d2e0);
}

.arrow svg {
    width: 10px;
    height: 10px;
    margin: auto;
    fill: none;
    stroke: #333;
    stroke-width: 2;
}

.thumb {
    border: 1px solid #a09fb0;
    border-radius: 2px;
}

.scroll-y .thumb {
    width: 16px;
    flex: 76;
    background: repeating-linear-gradient(#8f8ea5 0 1px, transparent 1px 2px) center / 6px 7px no-repeat, linear-gradient(90deg, #fff, #cccbdd);
}

.scroll-y .before {
    flex: 191;
}

.scroll-y .after {
    flex: 207;
}

.scroll-x .thumb {
    height: 16px;
    flex: 115;
    background: repeating-linear-gradient(90deg, #8f8ea5 0 1px, transparent 1px 2px) center / 8px 6px no-repeat, linear-gradient(#fff, #cccbdd);
}

.scroll-x .before,
.scroll-x .after {
    flex: 290;
}

/* sheet tabs */
.bottom-row {
    grid-column: 2 / 5;
    display: flex;
    padding: 2px 0 1px;
    border-top: 1px solid #f5f5f8;
}

.tabs {
    display: flex;
    align-items: flex-start;
    gap: 2px;
    width: 223px;
    margin: 0 4px 0 20px;
    border-top: 1px solid #55545e;
}

.tab {
    display: flex;
    align-items: center;
    gap: 2px;
    height: 17px;
    padding: 0 12px 0 4px;
    color: #66656e;
    background: #d3d2dc;
    border-right: 1px solid #aaa9b6;
    border-bottom: 1px solid #aaa9b6;
}

.tab svg {
    width: 14px;
    height: 14px;
}

.tab.active {
    height: 19px;
    margin-left: 4px;
    padding-right: 6px;
    font-size: 10px;
    font-weight: bold;
    color: #000;
    background: #e6e5ee;
    border-right: 2px solid #222;
    border-bottom: 2px solid #222;
}

/* inspector bar */
.inspector {
    display: flex;
    height: 41px;
    flex: none;
    padding: 4px 0 5px 3px;
    border-bottom: 1px solid #88878f;
    overflow: hidden;
}

.inspector-tools {
    display: flex;
    width: 73px;
    flex: none;
    margin-right: 5px;
    border-right: 1px solid #a4a3b4;
}

.inspector button {
    width: 24px;
    height: 24px;
    background: none;
}

.field {
    position: relative;
    width: 77px;
    flex: none;
    margin-right: 4px;
    line-height: 14px;
}

.field input {
    display: block;
    width: 100%;
    height: 16px;
    padding-left: 4px;
    border: 1px solid #f0f0f4;
    border-top-color: #98979f;
    border-left-color: #98979f;
    background: #e2e1e6;
    color: #a9a8a6;
}

.spin::before,
.spin::after {
    content: "";
    position: absolute;
    right: 4px;
    top: 17px;
    border: 3px solid transparent;
    border-bottom-color: #b9b8b0;
    border-top: none;
}

.spin::after {
    top: 24px;
    border-top: 3px solid #b9b8b0;
    border-bottom: none;
}

.inspector-modes {
    display: flex;
    gap: 1px;
    flex: none;
    margin-left: 2px;
    padding-left: 5px;
    border-left: 1px solid #a4a3b4;
}

.inspector .pressed {
    background: #ebebf0;
    border: 1px solid #fff;
    border-top-color: #85848f;
    border-left-color: #85848f;
}

/* status bar */
.statusbar {
    display: flex;
    align-items: center;
    justify-content: flex-end;
    height: 27px;
    flex: none;
    padding-right: 20px;
    border-top: 1px solid #fff;
}

.mode {
    height: 20px;
    padding: 0 3px;
    border-right: 1px solid #fff;
}

.coord {
    display: flex;
    align-items: center;
    margin-left: 17px;
}

.coord + .coord {
    margin-left: 14px;
}

.coord input {
    width: 73px;
    height: 19px;
    padding-left: 2px;
    border: 1px solid #111;
    outline: 1px solid #555;
    outline-offset: -1px;
    background: #fff;
}

.coord .dim {
    color: #8b8a90;
}

.axis {
    width: 10px;
    padding-top: 7px;
    font-size: 10px;
    line-height: 10px;
    background: linear-gradient(#fff, #fff) 3px 2px / 4px 4px no-repeat, linear-gradient(#000, #000) 1px 0 / 8px 8px no-repeat;
}

.zoom {
    width: 56px;
    margin-left: 3px;
    padding-left: 5px;
    line-height: 20px;
    border-left: 1px solid #fff;
}

.clock {
    padding: 0 5px;
    line-height: 20px;
    border-left: 1px solid #fff;
}
```
